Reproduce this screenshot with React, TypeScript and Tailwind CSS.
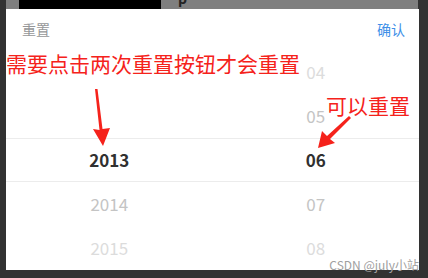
import React from 'react';

const leftCol = ['', '', '2013', '2014', '2015'];
const rightCol = ['04', '05', '06', '07', '08'];

// colour per row, top to bottom (faded by the picker mask)
const rowTone = ['text-[#dcdcdc]', 'text-[#c4c4c4]', 'text-[#303030] font-bold', 'text-[#c4c4c4]', 'text-[#dcdcdc]'];

const PickerColumn = ({ items }: { items: string[] }) => (
  <div className="flex-1 flex flex-col">
    {items.map((v, i) => (
      <div
        key={i}
        className={`h-[44px] flex items-center justify-center text-[17px] ${rowTone[i]} ${
          i === 2 ? 'border-y border-[#ececec]' : ''
        }`}
      >
        {v}
      </div>
    ))}
  </div>
);

export default function App() {
  return (
    <div
      className="relative w-[428px] h-[278px] overflow-hidden bg-[#323232]"
      style={{ fontFamily: '"Noto Sans CJK SC", "Noto Sans", sans-serif' }}
    >
      {/* page behind the overlay */}
      <div className="ml-[6px] w-[412px] h-[9px] bg-[#7f7f7f] flex overflow-hidden">
        <div className="ml-[13px] w-[142px] h-full bg-black" />
        <div className="ml-[17px] -mt-[9px] text-[14px] font-bold text-[#222] leading-none">p</div>
      </div>

      {/* popup */}
      <div className="ml-[6px] w-[413px] h-[261px] bg-white flex flex-col">
        <div className="h-[41px] flex items-center justify-between pl-[16px] pr-[14px] text-[14px]">
          <span className="text-[#969799]">重置</span>
          <span className="text-[#3d8fe8]">确认</span>
        </div>
        <div className="flex">
          <PickerColumn items={leftCol} />
          <PickerColumn items={rightCol} />
        </div>
      </div>

      {/* annotations */}
      <div className="absolute left-[6px] top-[53px] text-[21px] leading-none text-[#f5221b]">
        需要点击两次重置按钮才会重置
      </div>
      <div className="absolute left-[326px] top-[95px] text-[21px] leading-none text-[#f5221b]">
        可以重置
      </div>

      <svg className="absolute left-0 top-0" width="428" height="278" viewBox="0 0 428 278">
        <polygon points="95,89 97.5,89 102.5,129 110,128 103,146 93,129 99.5,130" fill="#f5221b" />
        <polygon points="349,116 351,118 330,139 335,143 318,148 322,131 327,136" fill="#f5221b" />
      </svg>

      <div className="absolute right-[9px] top-[259px] text-[12px] leading-none text-[#a0a0a0]">
        CSDN @july小站
      </div>
    </div>
  );
}
